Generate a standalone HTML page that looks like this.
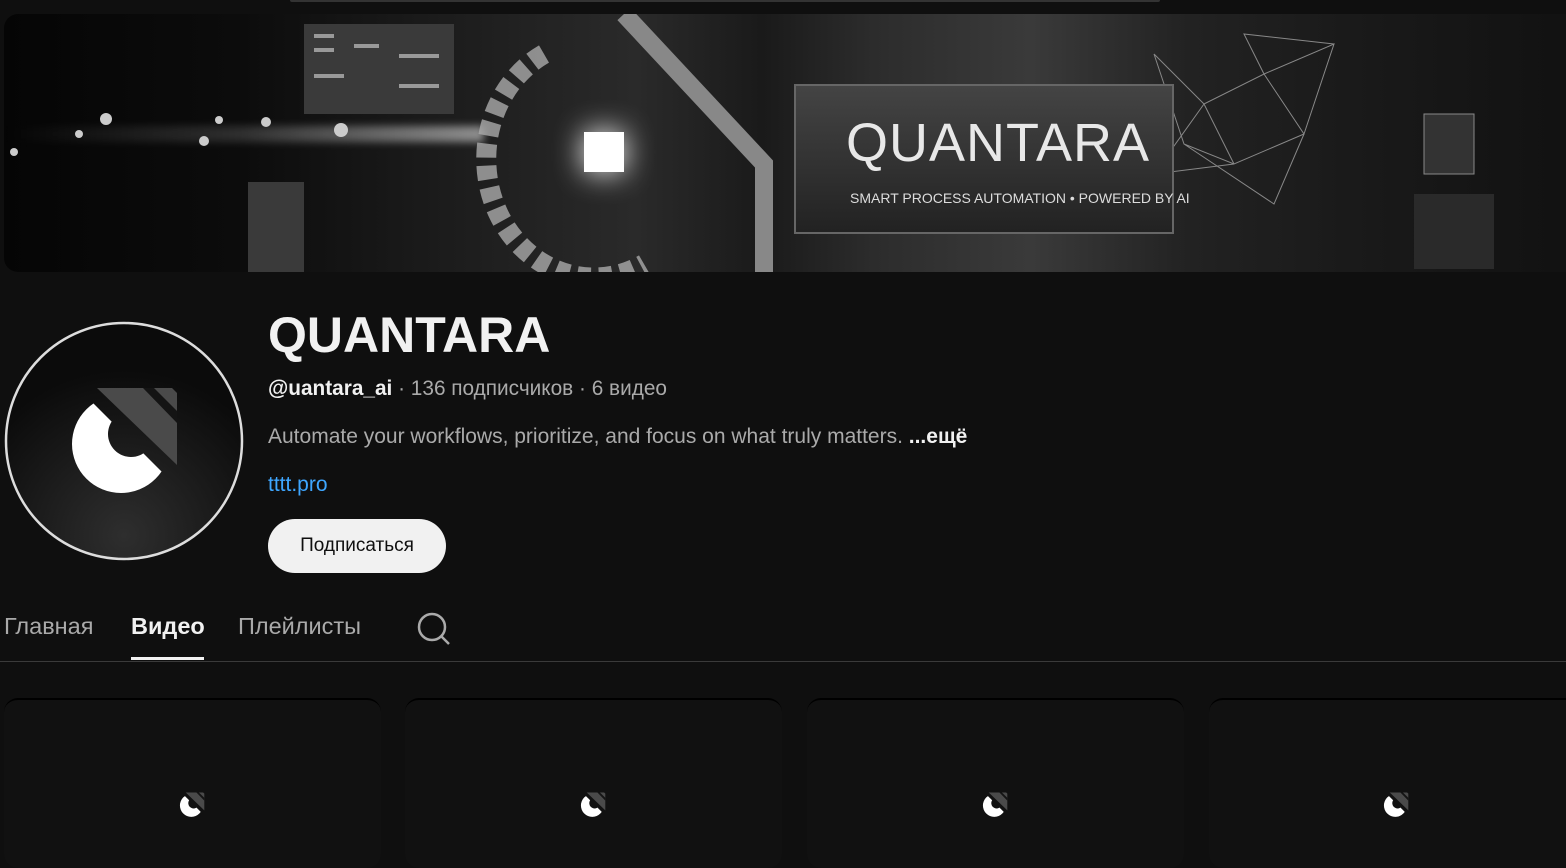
<!DOCTYPE html>
<html><head><meta charset="utf-8"><style>
*{margin:0;padding:0;box-sizing:border-box}
body{width:1566px;height:855px;background:#0f0f0f;overflow:hidden;position:relative;font-family:"Liberation Sans","DejaVu Sans",sans-serif;color:#f1f1f1}
.abs{position:absolute}
.banner{left:4px;top:14px;width:1580px;height:258px;border-radius:14px;overflow:hidden;
background:linear-gradient(90deg,#050505 0%,#0c0c0c 15%,#1c1c1c 28%,#2a2a2a 40%,#1a1a1a 48%,#2c2c2c 55%,#3a3a3a 65%,#222 75%,#1a1a1a 85%,#111 100%)}
.tabs span{position:absolute;top:613px;font-size:23.5px;color:#aaa}
.card{top:698px;width:377px;height:170px;background:#111;border-radius:14px;border-top:2px solid #000}
</style></head><body>
<div class="abs" style="left:290px;top:0;width:870px;height:2px;background:#333;border-radius:0 0 4px 4px"></div>
<div class="abs banner">
 <div class="abs" style="left:0;top:112px;width:480px;height:16px;background:linear-gradient(90deg,transparent,rgba(255,255,255,.15),rgba(255,255,255,.5));filter:blur(4px)"></div>
 <svg class="abs" style="left:0;top:0" width="1566" height="258">
  <g fill="#ccc"><circle cx="102" cy="105" r="6"/><circle cx="75" cy="120" r="4"/><circle cx="200" cy="127" r="5"/><circle cx="262" cy="108" r="5"/><circle cx="337" cy="116" r="7"/><circle cx="215" cy="106" r="4"/><circle cx="10" cy="138" r="4"/></g>
  <g fill="#3a3a3a"><rect x="300" y="10" width="150" height="90"/><rect x="244" y="168" width="56" height="90"/></g>
  <g fill="#999"><rect x="310" y="20" width="20" height="4"/><rect x="310" y="34" width="20" height="4"/><rect x="350" y="30" width="25" height="4"/><rect x="395" y="40" width="40" height="4"/><rect x="310" y="60" width="30" height="4"/><rect x="395" y="70" width="40" height="4"/></g>
  <path d="M540,40 A100,110 0 1 0 640,250" fill="none" stroke="#aaa" stroke-width="20" stroke-dasharray="14 8" opacity=".8"/>
  <path d="M620,0 L760,150 L760,258" fill="none" stroke="#888" stroke-width="18"/>
  <g stroke="#888" stroke-width="1" fill="none"><path d="M1150,40 L1200,90 L1260,60 L1300,120 L1230,150 L1180,130 L1150,40 M1200,90 L1230,150 M1260,60 L1330,30 L1300,120 M1180,130 L1270,190 L1300,120 M1200,90 L1150,160 L1230,150 M1260,60 L1240,20 L1330,30"/></g>
  <rect x="1420" y="100" width="50" height="60" fill="#333" stroke="#888"/>
  <rect x="1410" y="180" width="80" height="75" fill="#2a2a2a"/>
 </svg>
 <div class="abs" style="left:580px;top:118px;width:40px;height:40px;background:#fff;box-shadow:0 0 30px #fff"></div>
 <div class="abs" style="left:790px;top:70px;width:380px;height:150px;background:linear-gradient(#444,#222);border:2px solid #666"></div>
 <div class="abs" style="left:842px;top:98px;font-size:54px;color:#e8e8e8;letter-spacing:1px">QUANTARA</div>
 <div class="abs" style="left:846px;top:176px;font-size:14px;color:#ddd">SMART PROCESS AUTOMATION • POWERED BY AI</div>
</div>
<svg width="0" height="0" style="position:absolute"><defs>
 <clipPath id="c"><polygon points="0,310 0,700 390,700"/></clipPath>
 <g id="L">
  <polygon points="97,388 172,388 177,393 177,465" fill="#4a4a4a"/>
  <polygon points="143,388 154,388 177,411 177,423" fill="#141414"/>
  <path fill-rule="evenodd" d="M72,444 A49,49 0 1 0 170,444 A49,49 0 1 0 72,444 Z M108,434 A23,23 0 1 0 154,434 A23,23 0 1 0 108,434 Z" fill="#fff" clip-path="url(#c)"/>
 </g>
 <radialGradient id="g" cx="0.5" cy="0.9" r="0.7"><stop offset="0" stop-color="#2e2e2e"/><stop offset="1" stop-color="#0b0b0b"/></radialGradient>
</defs></svg>
<svg class="abs" style="left:4px;top:321px" width="240" height="240" viewBox="4 321 240 240">
 <circle cx="124" cy="441" r="118" fill="url(#g)" stroke="#ddd" stroke-width="2.5"/>
 <use href="#L"/>
</svg>
<div class="abs" style="left:268px;top:306px;font-size:50px;font-weight:bold;color:#f1f1f1">QUANTARA</div>
<div class="abs" style="left:268px;top:377px;font-size:20.8px;color:#aaa"><b style="color:#f1f1f1">@uantara_ai</b> · 136 подписчиков · 6 видео</div>
<div class="abs" style="left:268px;top:425px;font-size:21px;color:#aaa">Automate your workflows, prioritize, and focus on what truly matters. <b style="color:#f1f1f1">...ещё</b></div>
<div class="abs" style="left:268px;top:473px;font-size:21px;color:#3ea6ff">tttt.pro</div>
<div class="abs" style="left:268px;top:519px;width:178px;height:54px;border-radius:27px;background:#f1f1f1;color:#0f0f0f;font-size:19px;line-height:54px;text-align:center">Подписаться</div>
<div class="tabs">
 <span style="left:4px">Главная</span>
 <span style="left:131px;color:#f1f1f1;font-weight:bold">Видео</span>
 <span style="left:238px">Плейлисты</span>
</div>
<div class="abs" style="left:131px;top:657px;width:73px;height:3px;background:#f1f1f1"></div>
<svg class="abs" style="left:414px;top:609px" width="38" height="38" viewBox="0 0 38 38"><circle cx="18" cy="18" r="13" fill="none" stroke="#aaa" stroke-width="2.5"/><line x1="27" y1="27" x2="35" y2="35" stroke="#aaa" stroke-width="2.5"/></svg>
<div class="abs" style="left:0;top:661px;width:1566px;height:1px;background:#3a3a3a"></div>
<div class="abs card" style="left:4px"></div>
<div class="abs card" style="left:405px"></div>
<div class="abs card" style="left:807px"></div>
<div class="abs card" style="left:1209px"></div>
<svg class="abs" style="left:179px;top:792px" width="26" height="26" viewBox="68 386 112 112"><use href="#L"/></svg>
<svg class="abs" style="left:580px;top:792px" width="26" height="26" viewBox="68 386 112 112"><use href="#L"/></svg>
<svg class="abs" style="left:982px;top:792px" width="26" height="26" viewBox="68 386 112 112"><use href="#L"/></svg>
<svg class="abs" style="left:1383px;top:792px" width="26" height="26" viewBox="68 386 112 112"><use href="#L"/></svg>
</body></html>
